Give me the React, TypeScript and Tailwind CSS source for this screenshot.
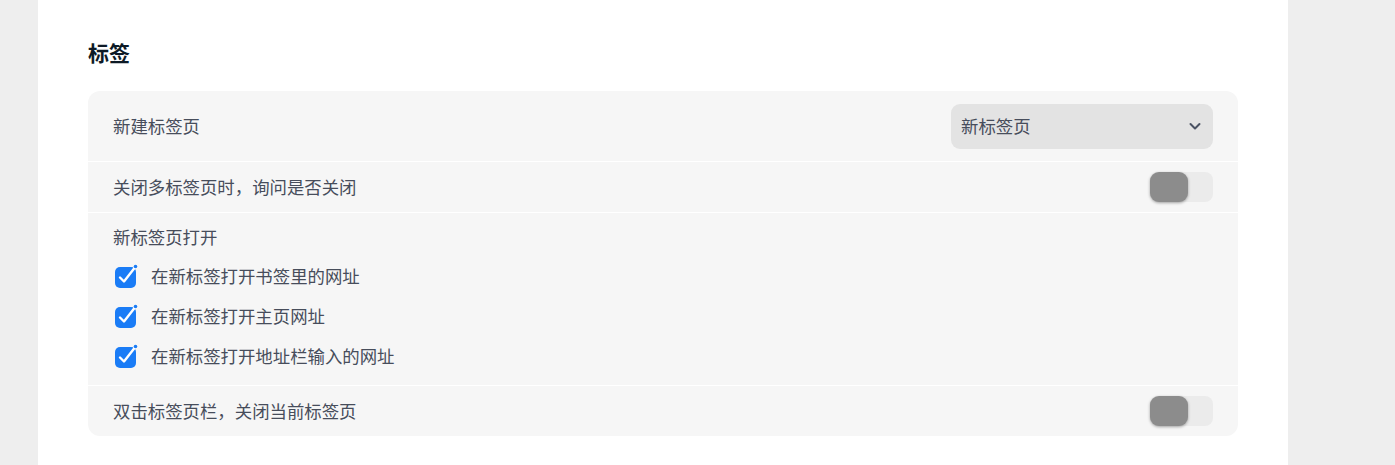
import React from "react";

const font = {
  fontFamily: '"Noto Sans CJK SC", "Noto Sans", sans-serif',
};

const Toggle: React.FC = () => (
  <div className="w-[63px] h-[30px] rounded-[8px] bg-[#ebebeb] flex items-center">
    <div className="w-[38px] h-[30px] rounded-[9px] bg-[#8c8c8c] shadow-[0_1px_3px_rgba(0,0,0,0.35)]" />
  </div>
);

const CheckBox: React.FC = () => (
  <svg width="26" height="26" viewBox="0 0 26 26" className="shrink-0">
    <rect x="2" y="4" width="21" height="21" rx="5" fill="#1a7cf6" />
    <path
      d="M7 14.5 L11 18.5 L21.5 5"
      fill="none"
      stroke="#ffffff"
      strokeWidth="2.4"
      strokeLinecap="round"
      strokeLinejoin="round"
    />
    <circle cx="22.5" cy="3.5" r="1.8" fill="#1a7cf6" />
  </svg>
);

const Chevron: React.FC = () => (
  <svg width="14" height="14" viewBox="0 0 14 14">
    <path
      d="M2.5 5 L7 9.5 L11.5 5"
      fill="none"
      stroke="#4a5263"
      strokeWidth="2"
      strokeLinecap="round"
      strokeLinejoin="round"
    />
  </svg>
);

const options = [
  "在新标签打开书签里的网址",
  "在新标签打开主页网址",
  "在新标签打开地址栏输入的网址",
];

export default function App() {
  return (
    <div className="w-[1395px] h-[465px] bg-[#eeeeee] flex" style={font}>
      <div className="ml-[38px] w-[1250px] h-full bg-white px-[50px] pt-[37px]">
        <h1 className="text-[21px] font-bold leading-[30px] text-[#0d1a26]">标签</h1>

        <div className="mt-[24px] rounded-[12px] bg-[#f6f6f6] text-[17.4px] text-[#474d5b] overflow-hidden">
          <div className="h-[71px] px-[25px] flex items-center justify-between border-b border-white">
            <span>新建标签页</span>
            <div className="w-[262px] h-[45px] rounded-[9px] bg-[#e3e3e3] pl-[10px] pr-[11px] flex items-center justify-between">
              <span>新标签页</span>
              <Chevron />
            </div>
          </div>

          <div className="h-[51px] px-[25px] flex items-center justify-between border-b border-white">
            <span>关闭多标签页时，询问是否关闭</span>
            <Toggle />
          </div>

          <div className="h-[173px] px-[25px] pt-[14px] border-b border-white">
            <div className="leading-[20px]">新标签页打开</div>
            <div className="mt-[9px] flex flex-col">
              {options.map((o) => (
                <div key={o} className="h-[40px] flex items-center gap-[12px]">
                  <CheckBox />
                  <span>{o}</span>
                </div>
              ))}
            </div>
          </div>

          <div className="h-[50px] px-[25px] flex items-center justify-between">
            <span>双击标签页栏，关闭当前标签页</span>
            <Toggle />
          </div>
        </div>
      </div>
    </div>
  );
}
